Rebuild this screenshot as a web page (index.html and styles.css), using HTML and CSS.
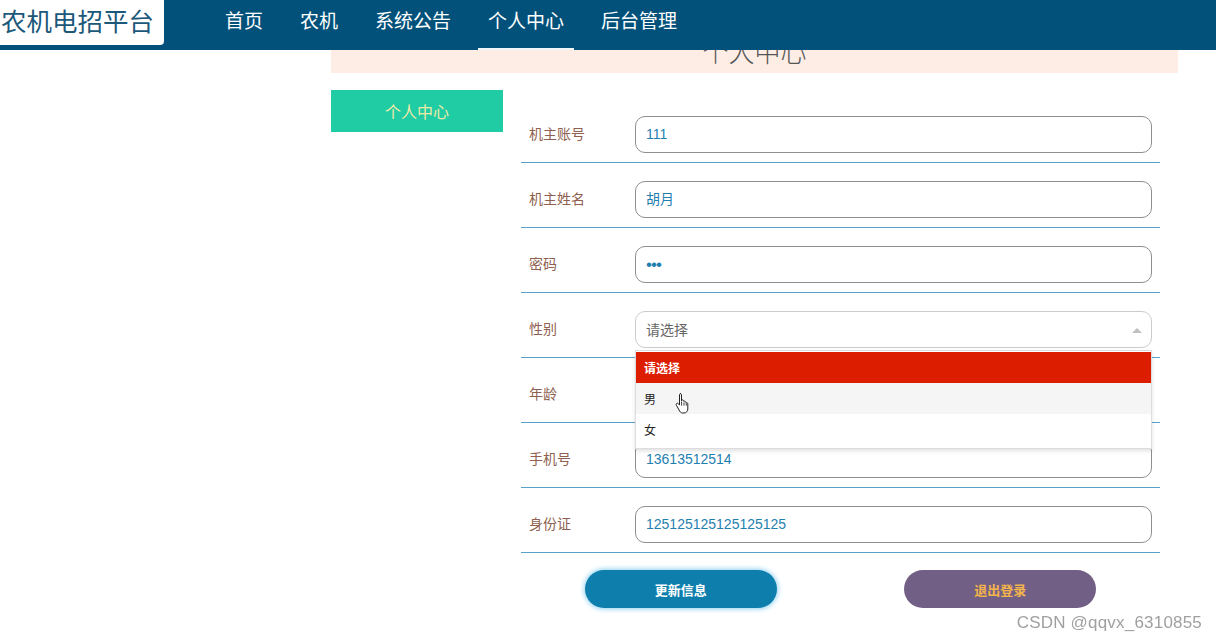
FILE: index.html
```html
<!DOCTYPE html>
<html lang="zh-CN">
<head>
<meta charset="utf-8">
<title>个人中心</title>
<link rel="stylesheet" href="styles.css">
</head>
<body>
<header class="topbar">
  <div class="logo">农机电招平台</div>
  <nav class="menu">
    <a class="menu-item">首页</a>
    <a class="menu-item">农机</a>
    <a class="menu-item">系统公告</a>
    <a class="menu-item active">个人中心</a>
    <a class="menu-item">后台管理</a>
  </nav>
</header>

<main class="page">
  <div class="title-bar">个人中心</div>
  <div class="content">
    <aside class="side">
      <div class="side-btn">个人中心</div>
    </aside>
    <form class="form">
      <div class="row">
        <label class="label">机主账号</label>
        <div class="field"><div class="input">111</div></div>
      </div>
      <div class="row">
        <label class="label">机主姓名</label>
        <div class="field"><div class="input">胡月</div></div>
      </div>
      <div class="row">
        <label class="label">密码</label>
        <div class="field"><div class="input dots">•••</div></div>
      </div>
      <div class="row row-select">
        <label class="label">性别</label>
        <div class="field">
          <div class="input select">请选择<span class="caret"></span></div>
          <ul class="dropdown">
            <li class="opt selected">请选择</li>
            <li class="opt hover">男
              <svg class="hand" viewBox="0 0 16 22" width="16" height="22"><path d="M5 1.5c.9 0 1.5.6 1.5 1.5v6.2l.2-1.2c.9-.4 1.8 0 2 .8l.1.6c.8-.5 1.8-.1 2 .8l.1.5c.8-.4 1.8 0 1.9 1v5.3c0 2.2-1.5 4-3.8 4H7.8c-1.3 0-2.3-.6-3-1.6L1.4 13.2c-.5-.8-.2-1.6.5-1.9.6-.3 1.3 0 1.7.6l.9 1.2V3c0-.9.6-1.5 1.5-1.5z" fill="#fff" stroke="#222" stroke-width="1" stroke-linejoin="round"/><path d="M6.6 10v3.6M9 10.5v3.1M11.3 11.2v2.4" stroke="#222" stroke-width=".9" fill="none"/></svg>
            </li>
            <li class="opt last">女</li>
          </ul>
        </div>
      </div>
      <div class="row">
        <label class="label">年龄</label>
        <div class="field"><div class="input"></div></div>
      </div>
      <div class="row">
        <label class="label">手机号</label>
        <div class="field"><div class="input">13613512514</div></div>
      </div>
      <div class="row">
        <label class="label">身份证</label>
        <div class="field"><div class="input">125125125125125125</div></div>
      </div>
      <div class="actions">
        <button type="button" class="btn btn-update">更新信息</button>
        <button type="button" class="btn btn-logout">退出登录</button>
      </div>
    </form>
  </div>
</main>

<div class="watermark">CSDN @qqvx_6310855</div>
</body>
</html>
```

FILE: styles.css
```css
* { box-sizing: border-box; }

body {
  margin: 0;
  background: #fff;
  font-family: "Liberation Sans", "Noto Sans CJK SC", sans-serif;
  width: 1216px;
  height: 641px;
  overflow: hidden;
}

.topbar {
  position: fixed;
  top: 0;
  left: 0;
  right: 0;
  height: 50px;
  background: #02517a;
  display: flex;
  align-items: flex-start;
  z-index: 10;
}

.logo {
  width: 164px;
  height: 45px;
  background: #fff;
  border-bottom-right-radius: 4px;
  color: #1b587a;
  font-family: "Noto Sans CJK SC", sans-serif;
  font-size: 25.5px;
  line-height: 39px;
  padding-left: 1px;
  white-space: nowrap;
}

.menu {
  display: flex;
  margin-left: 51px;
  gap: 17px;
  height: 50px;
}

.menu-item {
  display: block;
  height: 50px;
  padding: 0 10px;
  color: #fff;
  font-family: "Noto Sans CJK SC", sans-serif;
  font-size: 19px;
  line-height: 39px;
  border-bottom: 2px solid transparent;
}

.menu-item.active {
  border-bottom-color: #f2f6f8;
}

.page {
  margin-left: 331px;
  width: 847px;
  padding-top: 26px;
}

.title-bar {
  height: 47px;
  background: #fdede5;
  color: #555;
  font-family: "Noto Sans CJK SC", sans-serif;
  font-size: 26px;
  font-weight: 300;
  line-height: 50px;
  text-align: center;
}

.content {
  display: flex;
  margin-top: 17px;
  gap: 18px;
}

.side {
  width: 172px;
  flex: none;
}

.side-btn {
  height: 42px;
  background: #20cca4;
  color: #eeeaa8;
  font-family: "Noto Sans CJK SC", sans-serif;
  font-size: 16px;
  line-height: 42px;
  text-align: center;
}

.form {
  width: 639px;
  padding-top: 8px;
  margin: 0;
}

.row {
  display: flex;
  align-items: center;
  padding: 18px 8px 9px;
  border-bottom: 1px solid #5aa2c8;
}

.label {
  width: 106px;
  flex: none;
  color: #8f5f4f;
  font-family: "Noto Sans CJK SC", sans-serif;
  font-size: 14px;
  margin-top: -3px;
}

.field {
  position: relative;
  flex: 1;
}

.input {
  height: 37px;
  border: 1px solid #8f8f8f;
  border-radius: 10px;
  background: #fff;
  padding: 0 10px;
  color: #1f80b0;
  font-family: "Liberation Sans", "Noto Sans CJK SC", sans-serif;
  font-size: 14px;
  line-height: 35px;
}

.input.dots {
  font-size: 17px;
  letter-spacing: -1px;
}

.input.select {
  position: relative;
  color: #666;
  border-color: #ccc;
  font-family: "Noto Sans CJK SC", sans-serif;
}

.caret {
  position: absolute;
  right: 9px;
  top: 16px;
  width: 0;
  height: 0;
  border-left: 5px solid transparent;
  border-right: 5px solid transparent;
  border-bottom: 5px solid #c0c0c0;
}

.dropdown {
  position: absolute;
  left: 0;
  right: 0;
  top: calc(100% + 2px);
  margin: 0;
  padding: 1px 0 0;
  list-style: none;
  background: #fff;
  border: 1px solid #ddd;
  box-shadow: 0 2px 4px rgba(0, 0, 0, 0.12);
  z-index: 5;
}

.opt {
  position: relative;
  height: 31px;
  line-height: 31px;
  padding-left: 8px;
  font-family: "Noto Sans CJK SC", sans-serif;
  font-size: 12px;
  color: #222;
}

.opt.selected {
  background: #dd1d00;
  color: #fff;
  font-weight: bold;
}

.opt.hover {
  background: #f5f5f5;
}

.opt.last {
  height: 34px;
}

.hand {
  position: absolute;
  left: 39px;
  top: 9px;
}

.actions {
  display: flex;
  justify-content: space-around;
  margin-top: 17px;
}

.btn {
  width: 192px;
  height: 38px;
  border: none;
  border-radius: 19px;
  font-family: "Noto Sans CJK SC", sans-serif;
  font-size: 13px;
  font-weight: bold;
  cursor: pointer;
}

.btn-update {
  background: #0e7fad;
  color: #fff;
  box-shadow: 0 0 5px 1px #8fd0f0;
}

.btn-logout {
  background: #725f85;
  color: #f3b44b;
}

.watermark {
  position: fixed;
  right: 14px;
  bottom: 8px;
  color: #a0a0a0;
  font-family: "Liberation Sans", sans-serif;
  font-size: 17px;
  letter-spacing: 0.2px;
}
```
